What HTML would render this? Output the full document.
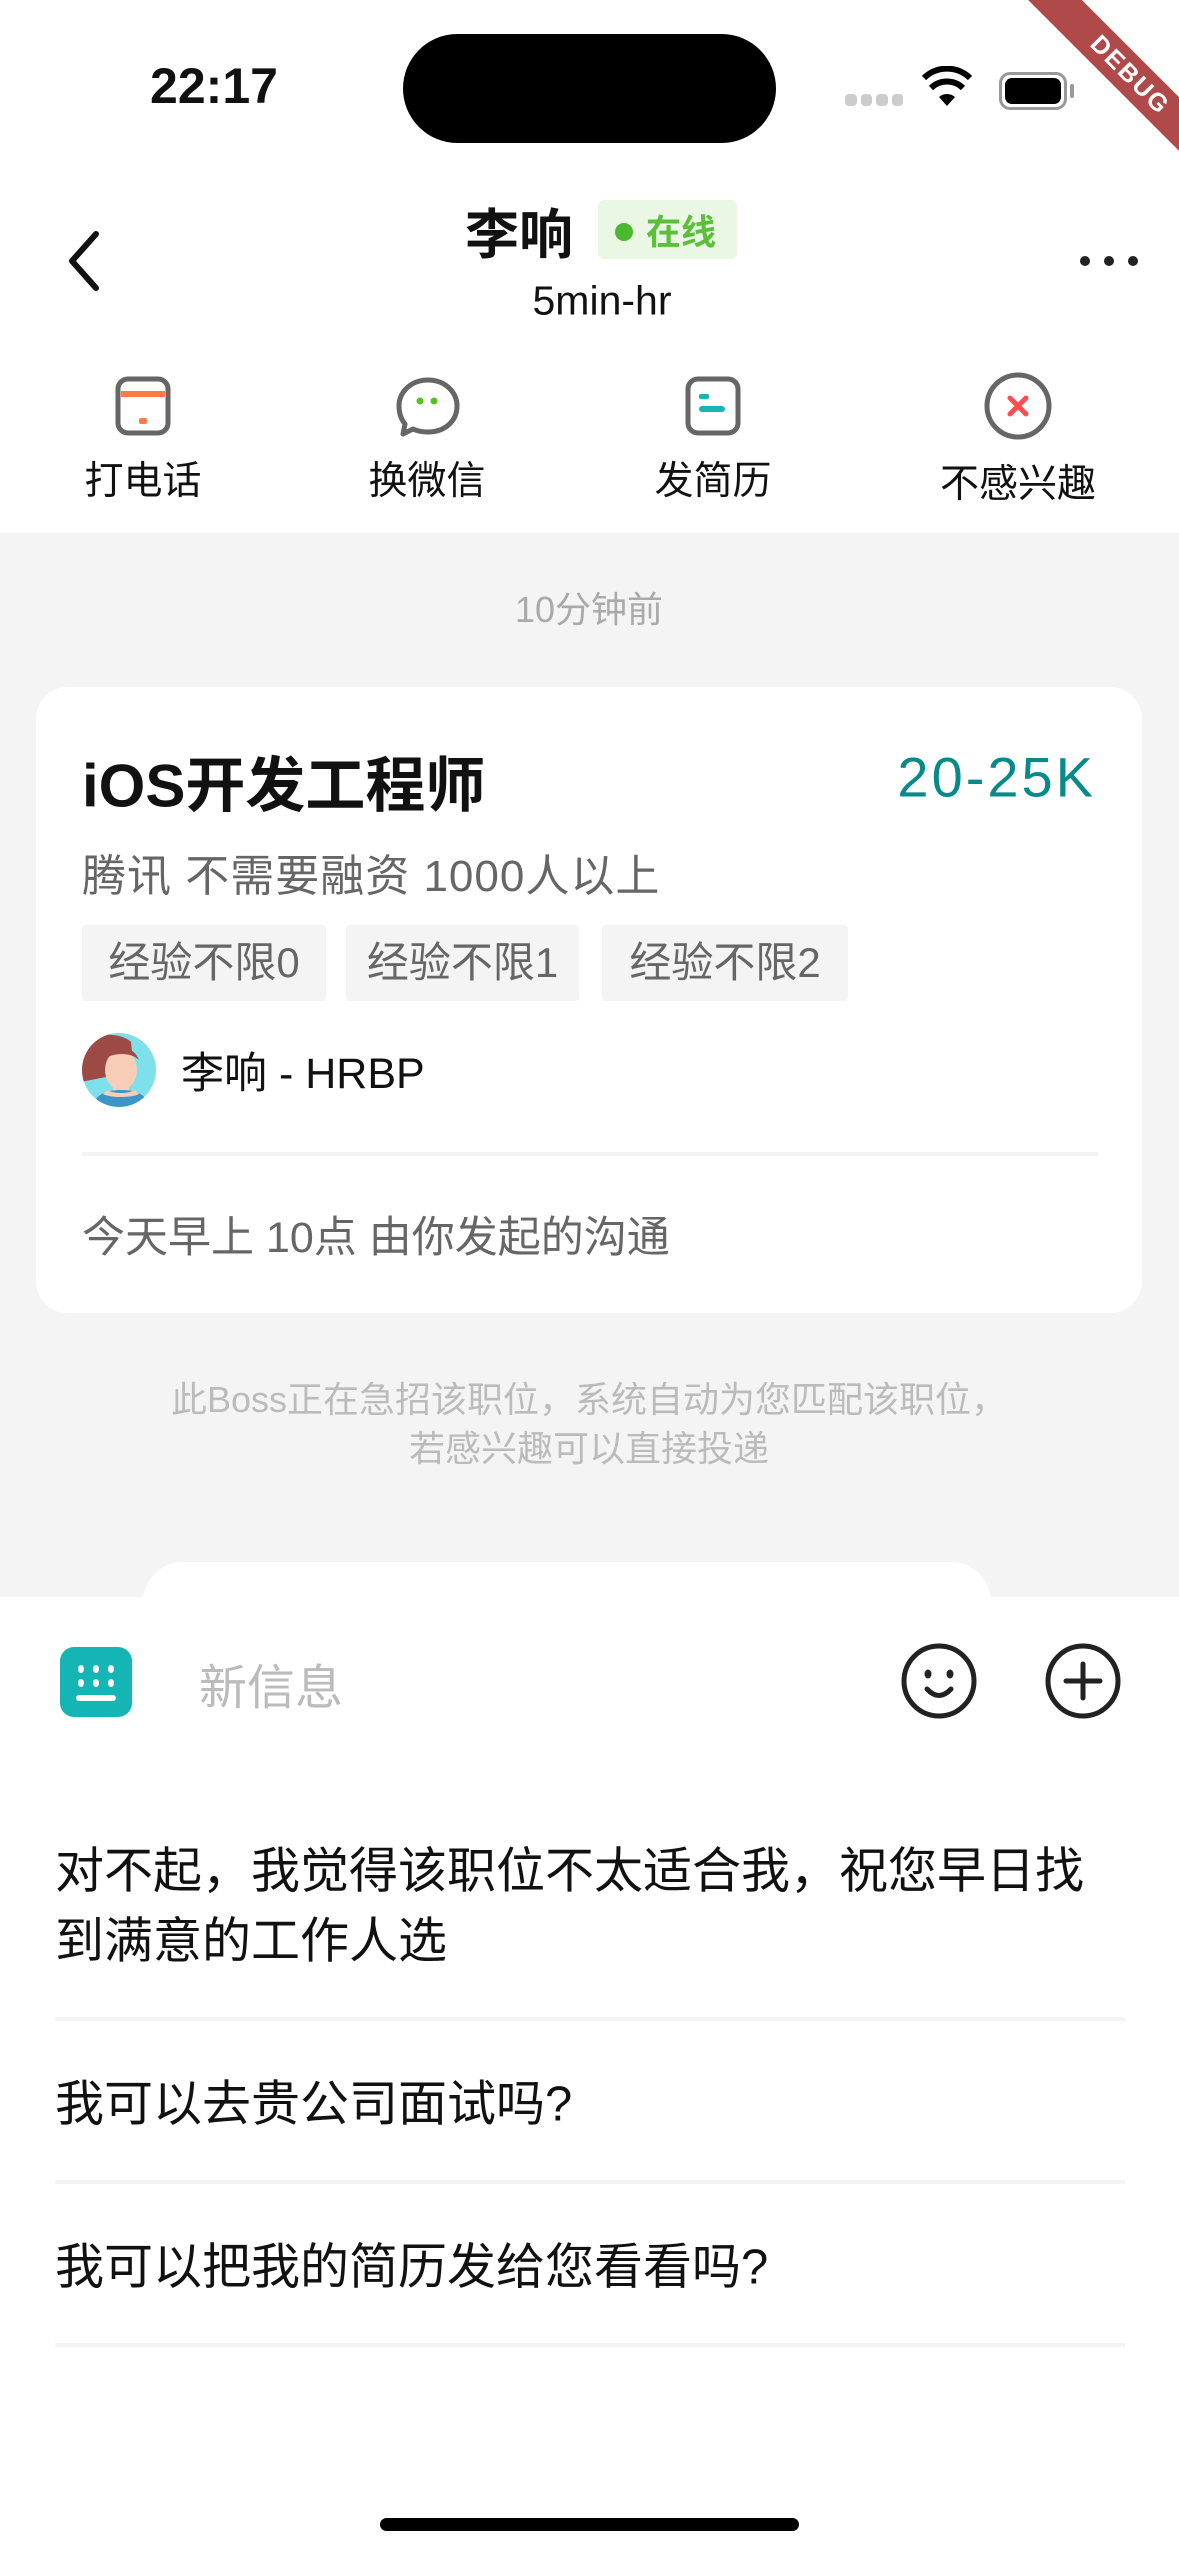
<!DOCTYPE html>
<html><head><meta charset="utf-8"><style>
*{margin:0;padding:0;box-sizing:border-box}
body{width:1179px;height:2556px;position:relative;background:#fff;overflow:hidden;font-family:"Liberation Sans","Noto Sans CJK SC",sans-serif;color:#111}
.a{position:absolute;white-space:nowrap}
.c{transform:translate(-50%,-50%)}
.ym{transform:translateY(-50%)}
</style></head><body>
<!-- status bar -->
<div class="a c" style="left:214px;top:86px;font-size:50px;font-weight:bold">22:17</div>
<div class="a" style="left:403px;top:34px;width:373px;height:109px;border-radius:55px;background:#000"></div>
<div class="a" style="left:845px;top:94px;width:58px;height:12px;display:flex;gap:4px"><i style="flex:1;background:#ccc;border-radius:4px"></i><i style="flex:1;background:#ccc;border-radius:4px"></i><i style="flex:1;background:#ccc;border-radius:4px"></i><i style="flex:1;background:#ccc;border-radius:4px"></i></div>
<svg class="a" style="left:922px;top:66px" width="50" height="42" viewBox="0 0 50 42"><path d="M25 40 L17 31 A12 12 0 0 1 33 31 Z" fill="#000"/><path d="M9 22 A23 23 0 0 1 41 22" stroke="#000" stroke-width="6" fill="none"/><path d="M2 12 A33 33 0 0 1 48 12" stroke="#000" stroke-width="6" fill="none"/></svg>
<div class="a" style="left:999px;top:72px;width:68px;height:38px;border:3px solid #999;border-radius:11px;padding:3px"><div style="width:100%;height:100%;background:#000;border-radius:7px"></div></div>
<div class="a" style="left:1070px;top:84px;width:4px;height:14px;background:#999;border-radius:2px"></div>
<div class="a" style="left:990px;top:56px;width:280px;height:38px;background:#b04a4a;transform:rotate(45deg);color:#fff;font-weight:bold;font-size:25px;text-align:center;line-height:38px;letter-spacing:2px">DEBUG</div>
<!-- nav -->
<svg class="a" style="left:62px;top:228px" width="44" height="66" viewBox="0 0 44 66"><path d="M34 6 L10 33 L34 60" stroke="#111" stroke-width="6" fill="none" stroke-linecap="round" stroke-linejoin="round"/></svg>
<div class="a c" style="left:519px;top:230px;font-size:54px;font-weight:bold">李响</div>
<div class="a" style="left:598px;top:200px;width:139px;height:59px;background:#e9f7e4;border-radius:6px"></div>
<div class="a" style="left:615px;top:223px;width:18px;height:18px;border-radius:50%;background:#4cb82f"></div>
<div class="a ym" style="left:646px;top:230px;font-size:35px;font-weight:bold;color:#5cbf3c">在线</div>
<div class="a c" style="left:602px;top:301px;font-size:41px">5min-hr</div>
<div class="a" style="left:1080px;top:256px;display:flex;gap:14px"><i style="width:10px;height:10px;background:#222;border-radius:50%"></i><i style="width:10px;height:10px;background:#222;border-radius:50%"></i><i style="width:10px;height:10px;background:#222;border-radius:50%"></i></div>
<!-- actions -->
<svg class="a" style="left:115px;top:376px" width="56" height="60" viewBox="0 0 56 60"><rect x="3" y="3" width="50" height="54" rx="10" fill="none" stroke="#666" stroke-width="5"/><rect x="6" y="15" width="44" height="6" fill="#ff7a45"/><rect x="24" y="42" width="8" height="6" rx="2" fill="#ff7a45"/></svg>
<svg class="a" style="left:395px;top:376px" width="66" height="62" viewBox="0 0 66 62"><path d="M33 4 C50 4 62 16 62 30 C62 45 50 56 33 56 C27 56 22 55 18 53 L8 58 L10 48 C6 43 4 37 4 30 C4 16 16 4 33 4 Z" fill="none" stroke="#666" stroke-width="5" stroke-linejoin="round"/><circle cx="25" cy="25" r="3.5" fill="#52c41a"/><circle cx="39" cy="25" r="3.5" fill="#52c41a"/></svg>
<svg class="a" style="left:685px;top:376px" width="56" height="60" viewBox="0 0 56 60"><rect x="3" y="3" width="50" height="54" rx="10" fill="none" stroke="#666" stroke-width="5"/><rect x="14" y="18" width="10" height="5" rx="2" fill="#15b5b5"/><rect x="14" y="30" width="26" height="6" rx="3" fill="#15b5b5"/></svg>
<svg class="a" style="left:982px;top:370px" width="72" height="72" viewBox="0 0 72 72"><circle cx="36" cy="36" r="31" fill="none" stroke="#666" stroke-width="5"/><path d="M28 28 L44 44 M44 28 L28 44" stroke="#ff4d4f" stroke-width="5" stroke-linecap="round"/></svg>
<div class="a c" style="left:143px;top:478px;font-size:39px">打电话</div>
<div class="a c" style="left:427px;top:478px;font-size:39px">换微信</div>
<div class="a c" style="left:713px;top:478px;font-size:39px">发简历</div>
<div class="a c" style="left:1018px;top:481px;font-size:39px">不感兴趣</div>
<!-- gray area -->
<div class="a" style="left:0;top:533px;width:1179px;height:1064px;background:#f4f4f4"></div>
<div class="a c" style="left:589px;top:607px;font-size:36px;color:#aaa">10分钟前</div>
<div class="a" style="left:36px;top:687px;width:1106px;height:626px;background:#fff;border-radius:32px"></div>
<div class="a ym" style="left:82px;top:781px;font-size:60px;font-weight:bold">iOS开发工程师</div>
<div class="a ym" style="right:83px;top:777px;font-size:56px;color:#078a8a;letter-spacing:3px">20-25K</div>
<div class="a ym" style="left:82px;top:872px;font-size:44px;color:#666;letter-spacing:1px">腾讯 不需要融资 1000人以上</div>
<div class="a" style="left:82px;top:925px;width:244px;height:76px;background:#f4f4f4;border-radius:4px;font-size:42px;color:#666;text-align:center;line-height:76px">经验不限0</div>
<div class="a" style="left:346px;top:925px;width:233px;height:76px;background:#f4f4f4;border-radius:4px;font-size:42px;color:#666;text-align:center;line-height:76px">经验不限1</div>
<div class="a" style="left:602px;top:925px;width:246px;height:76px;background:#f4f4f4;border-radius:4px;font-size:42px;color:#666;text-align:center;line-height:76px">经验不限2</div>
<svg class="a" style="left:81px;top:1032px" width="76" height="76" viewBox="0 0 76 76"><defs><clipPath id="cp"><circle cx="38" cy="38" r="37"/></clipPath></defs><g clip-path="url(#cp)"><rect width="76" height="76" fill="#7ee0ea"/><path d="M0 10 C10 0 40 0 50 10 L52 30 L30 44 L0 50 Z" fill="#9e4a44"/><ellipse cx="40" cy="38" rx="16" ry="20" fill="#f7cdb8"/><path d="M22 28 C30 10 52 12 58 28 C50 20 32 20 22 28Z" fill="#9e4a44"/><rect x="32" y="50" width="16" height="14" fill="#f7cdb8"/><path d="M10 76 C14 62 26 58 40 58 C54 58 66 62 70 76Z" fill="#3a96c6"/><path d="M22 62 C30 66 50 66 58 62 L54 58 C46 62 34 62 26 58Z" fill="#f7cdb8"/></g></svg>
<div class="a ym" style="left:181px;top:1070px;font-size:43px">李响 - HRBP</div>
<div class="a" style="left:82px;top:1152px;width:1016px;height:4px;background:#f3f3f3"></div>
<div class="a ym" style="left:82px;top:1234px;font-size:43px;color:#666">今天早上 10点 由你发起的沟通</div>
<div class="a c" style="left:589px;top:1397px;font-size:36px;color:#bbb">此Boss正在急招该职位，系统自动为您匹配该职位，</div>
<div class="a c" style="left:589px;top:1446px;font-size:36px;color:#bbb">若感兴趣可以直接投递</div>
<div class="a" style="left:143px;top:1562px;width:848px;height:80px;background:#fff;border-radius:40px 40px 0 0"></div>
<!-- input -->
<div class="a" style="left:60px;top:1647px;width:72px;height:70px;background:#15b5b5;border-radius:14px"></div>
<svg class="a" style="left:60px;top:1647px" width="72" height="70" viewBox="0 0 72 70"><g fill="#fff"><ellipse cx="21" cy="22" rx="3" ry="4"/><ellipse cx="36" cy="22" rx="3" ry="4"/><ellipse cx="51" cy="22" rx="3" ry="4"/><ellipse cx="21" cy="36" rx="3" ry="4"/><ellipse cx="36" cy="36" rx="3" ry="4"/><ellipse cx="51" cy="36" rx="3" ry="4"/><rect x="16" y="48" width="40" height="6" rx="3"/></g></svg>
<div class="a ym" style="left:199px;top:1683px;font-size:48px;color:#bbb">新信息</div>
<svg class="a" style="left:900px;top:1642px" width="78" height="78" viewBox="0 0 78 78"><circle cx="39" cy="39" r="35" fill="none" stroke="#222" stroke-width="5"/><ellipse cx="28" cy="32" rx="3.5" ry="4.5" fill="#222"/><ellipse cx="50" cy="32" rx="3.5" ry="4.5" fill="#222"/><path d="M27 47 Q39 60 51 47" fill="none" stroke="#222" stroke-width="5" stroke-linecap="round"/></svg>
<svg class="a" style="left:1044px;top:1642px" width="78" height="78" viewBox="0 0 78 78"><circle cx="39" cy="39" r="35" fill="none" stroke="#222" stroke-width="5"/><path d="M39 22 V56 M22 39 H56" stroke="#222" stroke-width="5" stroke-linecap="round"/></svg>
<!-- quick replies -->
<div class="a ym" style="left:55px;top:1867px;font-size:49px">对不起，我觉得该职位不太适合我，祝您早日找</div>
<div class="a ym" style="left:55px;top:1937px;font-size:49px">到满意的工作人选</div>
<div class="a" style="left:55px;top:2017px;width:1070px;height:4px;background:#f4f4f4"></div>
<div class="a ym" style="left:55px;top:2100px;font-size:49px">我可以去贵公司面试吗?</div>
<div class="a" style="left:55px;top:2180px;width:1070px;height:4px;background:#f4f4f4"></div>
<div class="a ym" style="left:55px;top:2263px;font-size:49px">我可以把我的简历发给您看看吗?</div>
<div class="a" style="left:55px;top:2343px;width:1070px;height:4px;background:#f4f4f4"></div>
<div class="a" style="left:380px;top:2518px;width:419px;height:13px;background:#000;border-radius:7px"></div>
</body></html>
